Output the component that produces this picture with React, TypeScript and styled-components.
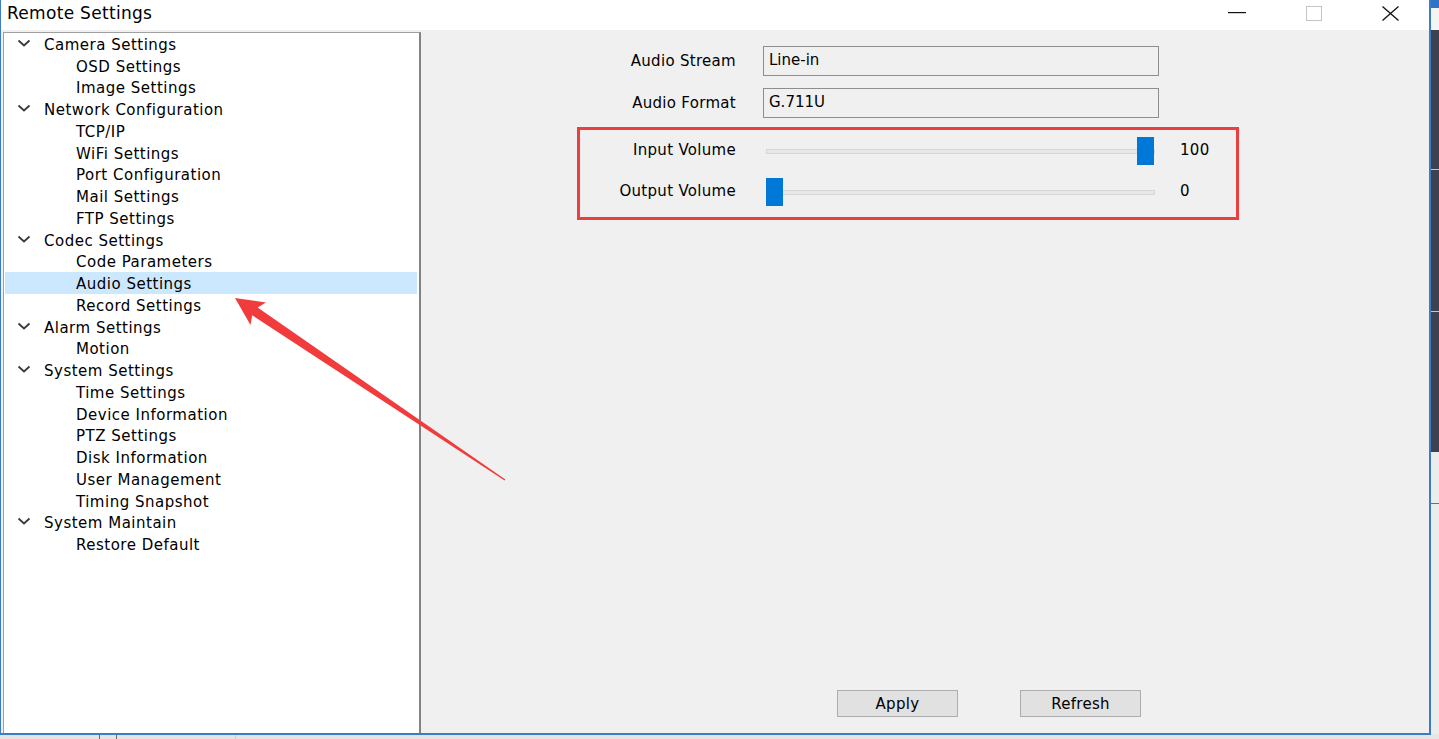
import styled, { createGlobalStyle } from 'styled-components';

const GlobalStyle = createGlobalStyle`
  html, body {
    margin: 0;
    padding: 0;
    overflow: hidden;
    background: #e6e6e6;
  }
  * {
    box-sizing: border-box;
  }
`;

const Page = styled.div`
  position: relative;
  display: flex;
  width: 1439px;
  height: 739px;
  font-family: 'DejaVu Sans', 'Liberation Sans', sans-serif;
  color: #000;
`;

const LeftColumn = styled.div`
  display: flex;
  flex-direction: column;
  width: 1431px;
  flex: none;
`;

const Window = styled.div`
  display: flex;
  flex-direction: column;
  height: 735px;
  border-left: 1px solid #3b7cc4;
  border-right: 2px solid #3b7cc4;
  border-bottom: 2px solid #3b7cc4;
`;

const TitleBar = styled.div`
  display: flex;
  align-items: center;
  height: 30px;
  flex: none;
  background: #fff;
`;

const Title = styled.div`
  flex: 1;
  padding-left: 6px;
  font-size: 17px;
  letter-spacing: 0.3px;
  margin-top: -4px;
`;

const CaptionButton = styled.div`
  display: flex;
  align-items: center;
  justify-content: center;
  width: 77px;
  height: 30px;
  margin-top: -4px;
`;

const Body = styled.div`
  display: flex;
  flex: 1;
  min-height: 0;
  background: #f0f0f0;
  padding: 2px 0 0 2px;
`;

const Tree = styled.div`
  width: 418px;
  flex: none;
  background: #fff;
  border-top: 1px solid #a0a0a0;
  border-left: 1px solid #a0a0a0;
  border-right: 2px solid #828282;
  padding: 0 2px 0 1px;
  font-size: 15px;
  letter-spacing: 0.5px;
`;

const TreeRow = styled.div<{ $level: number; $selected?: boolean }>`
  display: flex;
  align-items: center;
  height: 21.75px;
  padding-top: 2px;
  padding-left: ${({ $level }) => ($level === 0 ? 12 : 71)}px;
  background: ${({ $selected }) => ($selected ? '#cce8ff' : 'transparent')};
  white-space: nowrap;
`;

const Chevron = styled.svg`
  width: 14px;
  height: 8px;
  margin-right: 13px;
  margin-top: -4px;
`;

const Content = styled.div`
  flex: 1;
  display: flex;
  flex-direction: column;
  font-size: 15px;
  letter-spacing: 0.3px;
`;

const FieldList = styled.div`
  display: flex;
  flex-direction: column;
  gap: 12px;
  padding-top: 14px;
`;

const FieldRow = styled.div`
  display: flex;
  align-items: center;
`;

const FieldLabel = styled.div`
  width: 315px;
  text-align: right;
  margin-right: 27px;
`;

const ReadonlyBox = styled.div`
  width: 396px;
  height: 30px;
  border: 1px solid #8e8e8e;
  background: #f0f0f0;
  padding: 0 0 3px 5px;
  display: flex;
  align-items: center;
  letter-spacing: 0;
`;

const VolumeGroup = styled.div`
  margin: 9px 0 0 156px;
  width: 662px;
  height: 93px;
  border: 3px solid #ea3f3f;
  padding-top: 7px;
  display: flex;
  flex-direction: column;
  gap: 13px;
`;

const SliderRow = styled.div`
  display: flex;
  align-items: center;
  height: 28px;
`;

const SliderLabel = styled.div`
  width: 156px;
  text-align: right;
  margin-top: -2px;
`;

const Slider = styled.div`
  position: relative;
  display: flex;
  align-items: center;
  width: 389px;
  height: 28px;
  margin-left: 30px;
`;

const Track = styled.div`
  width: 100%;
  height: 5px;
  background: #e7e7e7;
  border: 1px solid #d6d6d6;
`;

const Thumb = styled.div`
  position: absolute;
  top: 0;
  width: 17px;
  height: 28px;
  background: #0078d7;
`;

const SliderValue = styled.div`
  margin-left: 25px;
  margin-top: -2px;
`;

const ButtonRow = styled.div`
  display: flex;
  gap: 62px;
  margin-top: auto;
  padding: 0 0 16px 416px;
`;

const Button = styled.div`
  width: 121px;
  height: 27px;
  display: flex;
  align-items: center;
  justify-content: center;
  background: #e1e1e1;
  border: 1px solid #adadad;
  padding-top: 1px;
`;

const BottomStrip = styled.div`
  flex: 1;
  display: flex;
  background: #e4e4e4;
`;

const StripCell = styled.div<{ $w: number; $line?: string }>`
  width: ${({ $w }) => $w}px;
  border-right: 1px solid ${({ $line }) => $line || 'transparent'};
`;

const Desktop = styled.div`
  flex: 1;
  display: flex;
  flex-direction: column;
`;

const DesktopBand = styled.div<{ $h: number; $bg: string; $line?: string }>`
  height: ${({ $h }) => $h}px;
  background: ${({ $bg }) => $bg};
  border-bottom: 1px solid ${({ $line }) => $line || 'transparent'};
`;

const Overlay = styled.svg`
  position: absolute;
  left: 0;
  top: 0;
  pointer-events: none;
`;

type Node = { label: string; level: number; selected?: boolean };

const tree: Node[] = [
  { label: 'Camera Settings', level: 0 },
  { label: 'OSD Settings', level: 1 },
  { label: 'Image Settings', level: 1 },
  { label: 'Network Configuration', level: 0 },
  { label: 'TCP/IP', level: 1 },
  { label: 'WiFi Settings', level: 1 },
  { label: 'Port Configuration', level: 1 },
  { label: 'Mail Settings', level: 1 },
  { label: 'FTP Settings', level: 1 },
  { label: 'Codec Settings', level: 0 },
  { label: 'Code Parameters', level: 1 },
  { label: 'Audio Settings', level: 1, selected: true },
  { label: 'Record Settings', level: 1 },
  { label: 'Alarm Settings', level: 0 },
  { label: 'Motion', level: 1 },
  { label: 'System Settings', level: 0 },
  { label: 'Time Settings', level: 1 },
  { label: 'Device Information', level: 1 },
  { label: 'PTZ Settings', level: 1 },
  { label: 'Disk Information', level: 1 },
  { label: 'User Management', level: 1 },
  { label: 'Timing Snapshot', level: 1 },
  { label: 'System Maintain', level: 0 },
  { label: 'Restore Default', level: 1 },
];

function VolumeSlider({ value }: { value: number }) {
  return (
    <Slider>
      <Track />
      <Thumb style={{ left: `${(value / 100) * (389 - 18)}px` }} />
    </Slider>
  );
}

export default function App() {
  return (
    <Page>
      <GlobalStyle />
      <LeftColumn>
        <Window>
          <TitleBar>
            <Title>Remote Settings</Title>
            <CaptionButton>
              <svg width="18" height="2" viewBox="0 0 18 2">
                <rect x="0" y="0" width="18" height="1.2" fill="#111" />
              </svg>
            </CaptionButton>
            <CaptionButton>
              <svg width="16" height="15" viewBox="0 0 16 15">
                <rect x="0.5" y="0.5" width="15" height="14" fill="none" stroke="#c4c4c4" />
              </svg>
            </CaptionButton>
            <CaptionButton>
              <svg width="17" height="15" viewBox="0 0 17 15">
                <path d="M0.5 0.5 L16.5 14.5 M16.5 0.5 L0.5 14.5" stroke="#111" strokeWidth="1.3" />
              </svg>
            </CaptionButton>
          </TitleBar>
          <Body>
            <Tree>
              {tree.map((n) => (
                <TreeRow key={n.label} $level={n.level} $selected={n.selected}>
                  {n.level === 0 && (
                    <Chevron viewBox="0 0 14 8">
                      <polyline points="1.5,1.5 7,6.5 12.5,1.5" fill="none" stroke="#3a3a3a" strokeWidth="1.8" />
                    </Chevron>
                  )}
                  {n.label}
                </TreeRow>
              ))}
            </Tree>
            <Content>
              <FieldList>
                <FieldRow>
                  <FieldLabel>Audio Stream</FieldLabel>
                  <ReadonlyBox>Line-in</ReadonlyBox>
                </FieldRow>
                <FieldRow>
                  <FieldLabel>Audio Format</FieldLabel>
                  <ReadonlyBox>G.711U</ReadonlyBox>
                </FieldRow>
              </FieldList>
              <VolumeGroup>
                <SliderRow>
                  <SliderLabel>Input Volume</SliderLabel>
                  <VolumeSlider value={100} />
                  <SliderValue>100</SliderValue>
                </SliderRow>
                <SliderRow>
                  <SliderLabel>Output Volume</SliderLabel>
                  <VolumeSlider value={0} />
                  <SliderValue>0</SliderValue>
                </SliderRow>
              </VolumeGroup>
              <ButtonRow>
                <Button>Apply</Button>
                <Button>Refresh</Button>
              </ButtonRow>
            </Content>
          </Body>
        </Window>
        <BottomStrip>
          <StripCell $w={100} $line="#6a6a6a" />
          <StripCell $w={17} $line="#6a6a6a" />
          <StripCell $w={119} $line="#cfcfcf" />
        </BottomStrip>
      </LeftColumn>
      <Desktop>
        <DesktopBand $h={8} $bg="#2f73c6" />
        <DesktopBand $h={22} $bg="#f4f4f4" />
        <DesktopBand $h={140} $bg="#3b4350" $line="#c8c8c8" />
        <DesktopBand $h={142} $bg="#3b4350" $line="#c8c8c8" />
        <DesktopBand $h={140} $bg="#3b4350" />
        <DesktopBand $h={52} $bg="#ececec" $line="#707070" />
        <DesktopBand $h={230} $bg="#ececec" />
      </Desktop>
      <Overlay width="1439" height="739" viewBox="0 0 1439 739">
        <polygon
          points="235,298 266,302.5 257.6,307.5 505.4,479.4 504.6,480.6 252.2,315.3 250.5,325"
          fill="#f03c3c"
        />
      </Overlay>
    </Page>
  );
}
